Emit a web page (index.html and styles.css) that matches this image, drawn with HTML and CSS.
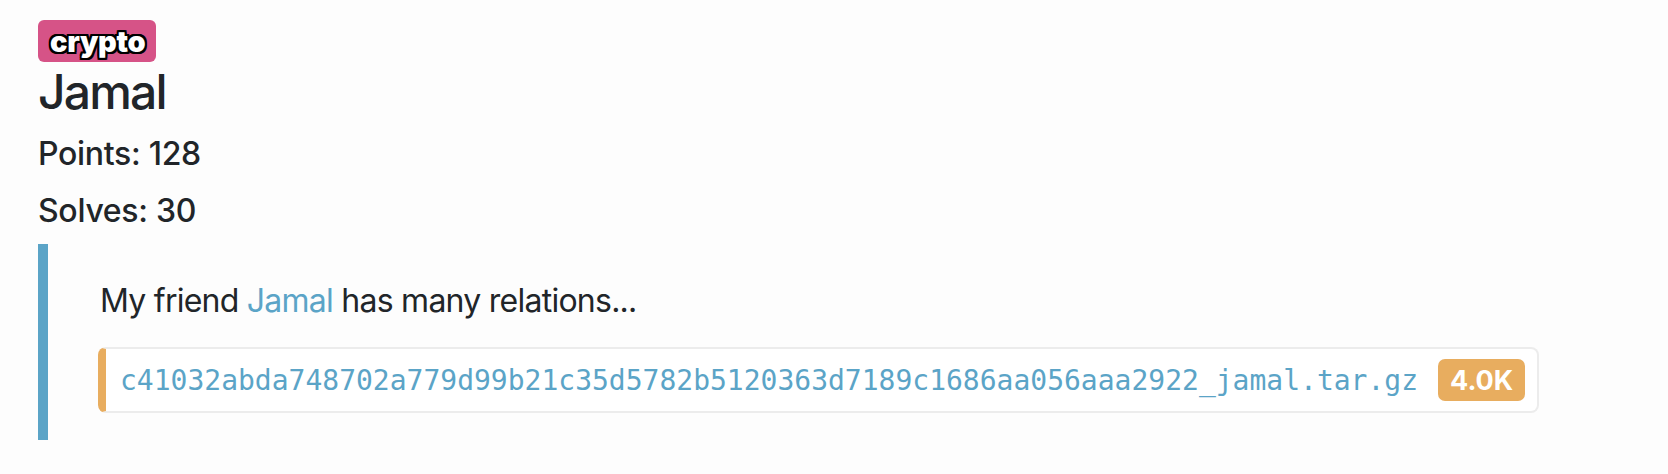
FILE: index.html
```html
<!DOCTYPE html>
<html lang="en">
<head>
<meta charset="utf-8">
<title>Jamal</title>
<link rel="stylesheet" href="styles.css">
</head>
<body>
<main class="challenge">
  <div class="tag-row"><span class="tag">crypto</span></div>
  <h1 class="title">Jamal</h1>
  <p class="stat">Points: 128</p>
  <p class="stat">Solves: 30</p>
  <blockquote class="desc">
    <p class="desc-text">My friend <a class="link" href="#">Jamal</a> has many relations...</p>
    <div class="file">
      <a class="file-name" href="#">c41032abda748702a779d99b21c35d5782b5120363d7189c1686aa056aaa2922_jamal.tar.gz</a>
      <span class="file-size">4.0K</span>
    </div>
  </blockquote>
</main>
</body>
</html>
```

FILE: styles.css
```css
html, body {
  margin: 0;
  padding: 0;
  background: #fdfdfd;
}
body {
  font-family: Inter, "Noto Sans", "Liberation Sans", sans-serif;
  color: #212529;
}
.challenge {
  padding-left: 38px;
}
.tag-row {
  display: flex;
  margin-top: 20px;
  height: 42px;
}
.tag {
  display: inline-flex;
  align-items: center;
  height: 42px;
  padding: 0 11px 0 12px;
  box-sizing: border-box;
  background: #d65387;
  border-radius: 6px;
  color: #fff;
  font-weight: 900;
  font-size: 29px;
  letter-spacing: -0.3px;
  text-shadow:
    -2px -2px 0 #000, 2px -2px 0 #000, -2px 2px 0 #000, 2px 2px 0 #000,
    0 -2px 0 #000, 0 2px 0 #000, -2px 0 0 #000, 2px 0 0 #000,
    -1px -2px 0 #000, 1px -2px 0 #000, -1px 2px 0 #000, 1px 2px 0 #000;
}
.title {
  margin: 2px 0 10px;
  font-size: 48px;
  line-height: 56px;
  font-weight: 500;
  letter-spacing: -1.8px;
}
.stat {
  margin: 0 0 9px;
  font-size: 32px;
  line-height: 48px;
  font-weight: 500;
  letter-spacing: -0.3px;
}
.desc {
  margin: 7px 0 0;
  padding: 33px 0 27px 50px;
  border-left: 10px solid #5ba4c7;
}
.desc-text {
  margin: 0;
  font-size: 32px;
  line-height: 48px;
  letter-spacing: -0.75px;
  padding-left: 2px;
}
.link {
  color: #5ba4c7;
  text-decoration: none;
}
.file {
  display: inline-flex;
  align-items: center;
  gap: 20px;
  margin-top: 22px;
  height: 66px;
  box-sizing: border-box;
  padding: 0 12px 0 14px;
  background: #fff;
  border: 2px solid #ececec;
  border-left: 8px solid #e8ad5f;
  border-radius: 8px;
}
.file-name {
  font-family: "DejaVu Sans Mono", "Liberation Mono", monospace;
  font-size: 28px;
  color: #5ba4c7;
  text-decoration: none;
}
.file-size {
  display: inline-flex;
  align-items: center;
  height: 42px;
  padding: 0 12px;
  background: #e8ad5f;
  border-radius: 7px;
  color: #fff;
  font-weight: 700;
  font-size: 27px;
}
```
